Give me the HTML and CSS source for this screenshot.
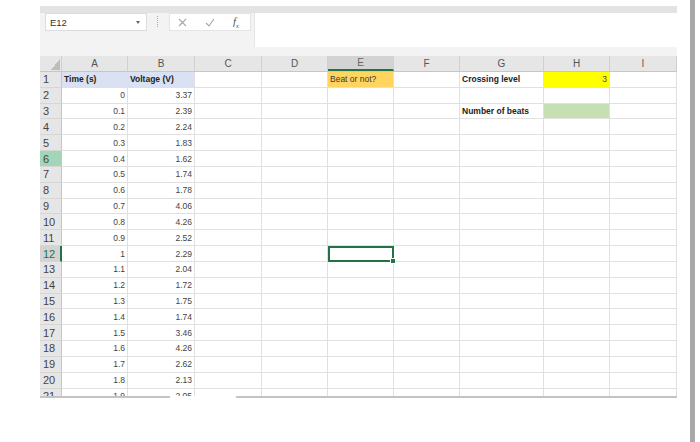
FILE: index.html
```html
<!doctype html>
<html>

<head>
   <meta charset="utf-8">
   <title>Beats - Excel</title>
   <link rel="stylesheet" href="styles.css">
</head>

<body>
   <div class="screen">
      <div class="app">
         <div class="topStrip"></div>

         <div class="formulaBar">
            <div class="nameBox">
               <span>E12</span>
               <span class="caret"></span>
            </div>
            <div class="grip"></div>
            <div class="fxButtons">
               <svg width="9" height="9" viewBox="0 0 9 9"><path d="M1 1 L8 8 M8 1 L1 8" stroke="#a6a6a6" stroke-width="1.1" fill="none"/></svg>
               <svg width="10" height="9" viewBox="0 0 10 9"><path d="M1 5 L4 8 L9 1" stroke="#a6a6a6" stroke-width="1.1" fill="none"/></svg>
               <span class="fx"><i>f</i><sub>x</sub></span>
            </div>
            <div class="formulaInput"></div>
         </div>

         <div class="row colHeads">
            <div class="corner"></div>
            <div>A</div><div>B</div><div>C</div><div>D</div>
            <div class="sel">E</div>
            <div>F</div><div>G</div><div>H</div><div>I</div>
         </div>

         <div class="sheet">
            <div class="row">
               <div class="rh">1</div>
               <div class="c b blue">Time (s)</div>
               <div class="c b blue">Voltage (V)</div>
               <div class="c"></div><div class="c"></div>
               <div class="c orange">Beat or not?</div>
               <div class="c"></div>
               <div class="c b">Crossing level</div>
               <div class="c n yellow">3</div>
               <div class="c"></div>
            </div>
            <div class="row"><div class="rh">2</div><div class="c n">0</div><div class="c n">3.37</div><div class="c"></div><div class="c"></div><div class="c"></div><div class="c"></div><div class="c"></div><div class="c"></div><div class="c"></div></div>
            <div class="row"><div class="rh">3</div><div class="c n">0.1</div><div class="c n">2.39</div><div class="c"></div><div class="c"></div><div class="c"></div><div class="c"></div><div class="c b">Number of beats</div><div class="c green"></div><div class="c"></div></div>
            <div class="row"><div class="rh">4</div><div class="c n">0.2</div><div class="c n">2.24</div><div class="c"></div><div class="c"></div><div class="c"></div><div class="c"></div><div class="c"></div><div class="c"></div><div class="c"></div></div>
            <div class="row"><div class="rh">5</div><div class="c n">0.3</div><div class="c n">1.83</div><div class="c"></div><div class="c"></div><div class="c"></div><div class="c"></div><div class="c"></div><div class="c"></div><div class="c"></div></div>
            <div class="row"><div class="rh mark">6</div><div class="c n">0.4</div><div class="c n">1.62</div><div class="c"></div><div class="c"></div><div class="c"></div><div class="c"></div><div class="c"></div><div class="c"></div><div class="c"></div></div>
            <div class="row"><div class="rh">7</div><div class="c n">0.5</div><div class="c n">1.74</div><div class="c"></div><div class="c"></div><div class="c"></div><div class="c"></div><div class="c"></div><div class="c"></div><div class="c"></div></div>
            <div class="row"><div class="rh">8</div><div class="c n">0.6</div><div class="c n">1.78</div><div class="c"></div><div class="c"></div><div class="c"></div><div class="c"></div><div class="c"></div><div class="c"></div><div class="c"></div></div>
            <div class="row"><div class="rh">9</div><div class="c n">0.7</div><div class="c n">4.06</div><div class="c"></div><div class="c"></div><div class="c"></div><div class="c"></div><div class="c"></div><div class="c"></div><div class="c"></div></div>
            <div class="row"><div class="rh">10</div><div class="c n">0.8</div><div class="c n">4.26</div><div class="c"></div><div class="c"></div><div class="c"></div><div class="c"></div><div class="c"></div><div class="c"></div><div class="c"></div></div>
            <div class="row"><div class="rh">11</div><div class="c n">0.9</div><div class="c n">2.52</div><div class="c"></div><div class="c"></div><div class="c"></div><div class="c"></div><div class="c"></div><div class="c"></div><div class="c"></div></div>
            <div class="row"><div class="rh sel">12</div><div class="c n">1</div><div class="c n">2.29</div><div class="c"></div><div class="c"></div><div class="c active"></div><div class="c"></div><div class="c"></div><div class="c"></div><div class="c"></div></div>
            <div class="row"><div class="rh">13</div><div class="c n">1.1</div><div class="c n">2.04</div><div class="c"></div><div class="c"></div><div class="c"></div><div class="c"></div><div class="c"></div><div class="c"></div><div class="c"></div></div>
            <div class="row"><div class="rh">14</div><div class="c n">1.2</div><div class="c n">1.72</div><div class="c"></div><div class="c"></div><div class="c"></div><div class="c"></div><div class="c"></div><div class="c"></div><div class="c"></div></div>
            <div class="row"><div class="rh">15</div><div class="c n">1.3</div><div class="c n">1.75</div><div class="c"></div><div class="c"></div><div class="c"></div><div class="c"></div><div class="c"></div><div class="c"></div><div class="c"></div></div>
            <div class="row"><div class="rh">16</div><div class="c n">1.4</div><div class="c n">1.74</div><div class="c"></div><div class="c"></div><div class="c"></div><div class="c"></div><div class="c"></div><div class="c"></div><div class="c"></div></div>
            <div class="row"><div class="rh">17</div><div class="c n">1.5</div><div class="c n">3.46</div><div class="c"></div><div class="c"></div><div class="c"></div><div class="c"></div><div class="c"></div><div class="c"></div><div class="c"></div></div>
            <div class="row"><div class="rh">18</div><div class="c n">1.6</div><div class="c n">4.26</div><div class="c"></div><div class="c"></div><div class="c"></div><div class="c"></div><div class="c"></div><div class="c"></div><div class="c"></div></div>
            <div class="row"><div class="rh">19</div><div class="c n">1.7</div><div class="c n">2.62</div><div class="c"></div><div class="c"></div><div class="c"></div><div class="c"></div><div class="c"></div><div class="c"></div><div class="c"></div></div>
            <div class="row"><div class="rh">20</div><div class="c n">1.8</div><div class="c n">2.13</div><div class="c"></div><div class="c"></div><div class="c"></div><div class="c"></div><div class="c"></div><div class="c"></div><div class="c"></div></div>
            <div class="row"><div class="rh">21</div><div class="c n">1.9</div><div class="c n">2.05</div><div class="c"></div><div class="c"></div><div class="c"></div><div class="c"></div><div class="c"></div><div class="c"></div><div class="c"></div></div>
         </div>

         <div class="sheetEdge">
            <div class="edgeLeft"></div>
            <div class="edgeRight"></div>
         </div>
      </div>

      <div class="scrollBar"></div>
   </div>
</body>

</html>
```

FILE: styles.css
```css
html,
body {
   padding: 0;
   margin: 0;
   background: #FFF;
   font-family: "Liberation Sans", Arial, sans-serif;
   color: #333;
}

.screen {
   display: flex;
   height: 442px;
   padding-left: 40px;
   box-sizing: border-box;
}

.app {
   width: 637px;
   padding-top: 6px;
}

.scrollBar {
   width: 5px;
   margin-left: 13px;
   background: #a8a8a8;
}

.topStrip {
   height: 7px;
   background: #e3e3e3;
}

/* formula bar */

.formulaBar {
   display: flex;
   align-items: flex-start;
   height: 43px;
   padding-left: 5px;
   background: #f3f3f3;
}

.nameBox {
   display: flex;
   align-items: center;
   justify-content: space-between;
   width: 102px;
   height: 18px;
   padding: 0 6px 0 4px;
   box-sizing: border-box;
   background: #FFF;
   border: 1px solid #dcdcdc;
   font-size: 9.5px;
   color: #333;
}

.nameBox .caret {
   width: 0;
   height: 0;
   border-left: 2.5px solid transparent;
   border-right: 2.5px solid transparent;
   border-top: 3px solid #666;
}

.grip {
   width: 0;
   height: 11px;
   margin: 3px 0 0 10px;
   border-left: 1px dotted #aaa;
}

.fxButtons {
   display: flex;
   align-items: center;
   gap: 18px;
   width: 82px;
   height: 18px;
   margin-left: 11px;
   padding-left: 8px;
   box-sizing: border-box;
   background: #FFF;
   border: 1px solid #e4e4e4;
}

.fxButtons .fx {
   font-family: "Liberation Serif", serif;
   font-size: 11px;
   color: #555;
   margin-left: 0;
}

.fxButtons .fx sub {
   font-size: 6.5px;
   font-style: italic;
}

.formulaInput {
   flex: 1;
   height: 34px;
   margin-left: 3px;
   background: #FFF;
   border-left: 1px solid #e4e4e4;
}

/* grid */

.row {
   display: grid;
   grid-template-columns: 22px 66px 67px 67px 66px 66px 66px 84px 66px 67px;
   height: 15.84px;
}

.colHeads {
   height: 15px;
   background: #e6e6e6;
   font-size: 10px;
   color: #555;
}

.colHeads div {
   display: flex;
   align-items: center;
   justify-content: center;
   border-right: 1px solid #d0d0d0;
   box-sizing: border-box;
}

.colHeads .corner {
   background: linear-gradient(to top left, #bdbdbd 50%, transparent 51%) no-repeat right 1px bottom 1px / 9px 11px;
}

.colHeads .sel {
   background: #d3d3d3;
   border-bottom: 2px solid #217346;
   color: #666;
}

.sheet {
   height: 325px;
   overflow: hidden;
   border-top: 1px solid #c6c6c6;
   box-sizing: border-box;
}

.rh {
   display: flex;
   align-items: center;
   padding-left: 3px;
   background: #e6e6e6;
   border-bottom: 1px solid #d6d6d6;
   border-right: 1px solid #c6c6c6;
   box-sizing: border-box;
   font-size: 11px;
   color: #444;
}

.rh.mark {
   background: #a3d6b6;
}

.rh.sel {
   background: #d3d3d3;
   color: #217346;
   border-right: 2px solid #217346;
}

.c {
   display: flex;
   align-items: center;
   padding: 0 2px;
   border-right: 1px solid #e0e0e0;
   border-bottom: 1px solid #e0e0e0;
   box-sizing: border-box;
   font-size: 8.5px;
   color: #333;
   white-space: nowrap;
   overflow: hidden;
}

.c.n {
   justify-content: flex-end;
   color: #444;
}

.c.b {
   font-weight: bold;
   color: #222;
}

.c.blue {
   background: #d9e1f2;
}

.c.orange {
   background: #ffd45f;
   color: #3a3a3a;
}

.c.yellow {
   background: #ffff00;
}

.c.green {
   background: #c6e0b4;
}

.c.active {
   position: relative;
   overflow: visible;
   border: 2px solid #217346;
}

.c.active::after {
   content: "";
   position: absolute;
   right: -4px;
   bottom: -4px;
   width: 4px;
   height: 4px;
   background: #217346;
   border: 1px solid #FFF;
}

.sheetEdge {
   display: flex;
   height: 2px;
}

.edgeLeft {
   width: 130px;
   background: #c4c4c4;
}

.edgeRight {
   flex: 1;
   margin-left: 66px;
   background: #c4c4c4;
}
```
